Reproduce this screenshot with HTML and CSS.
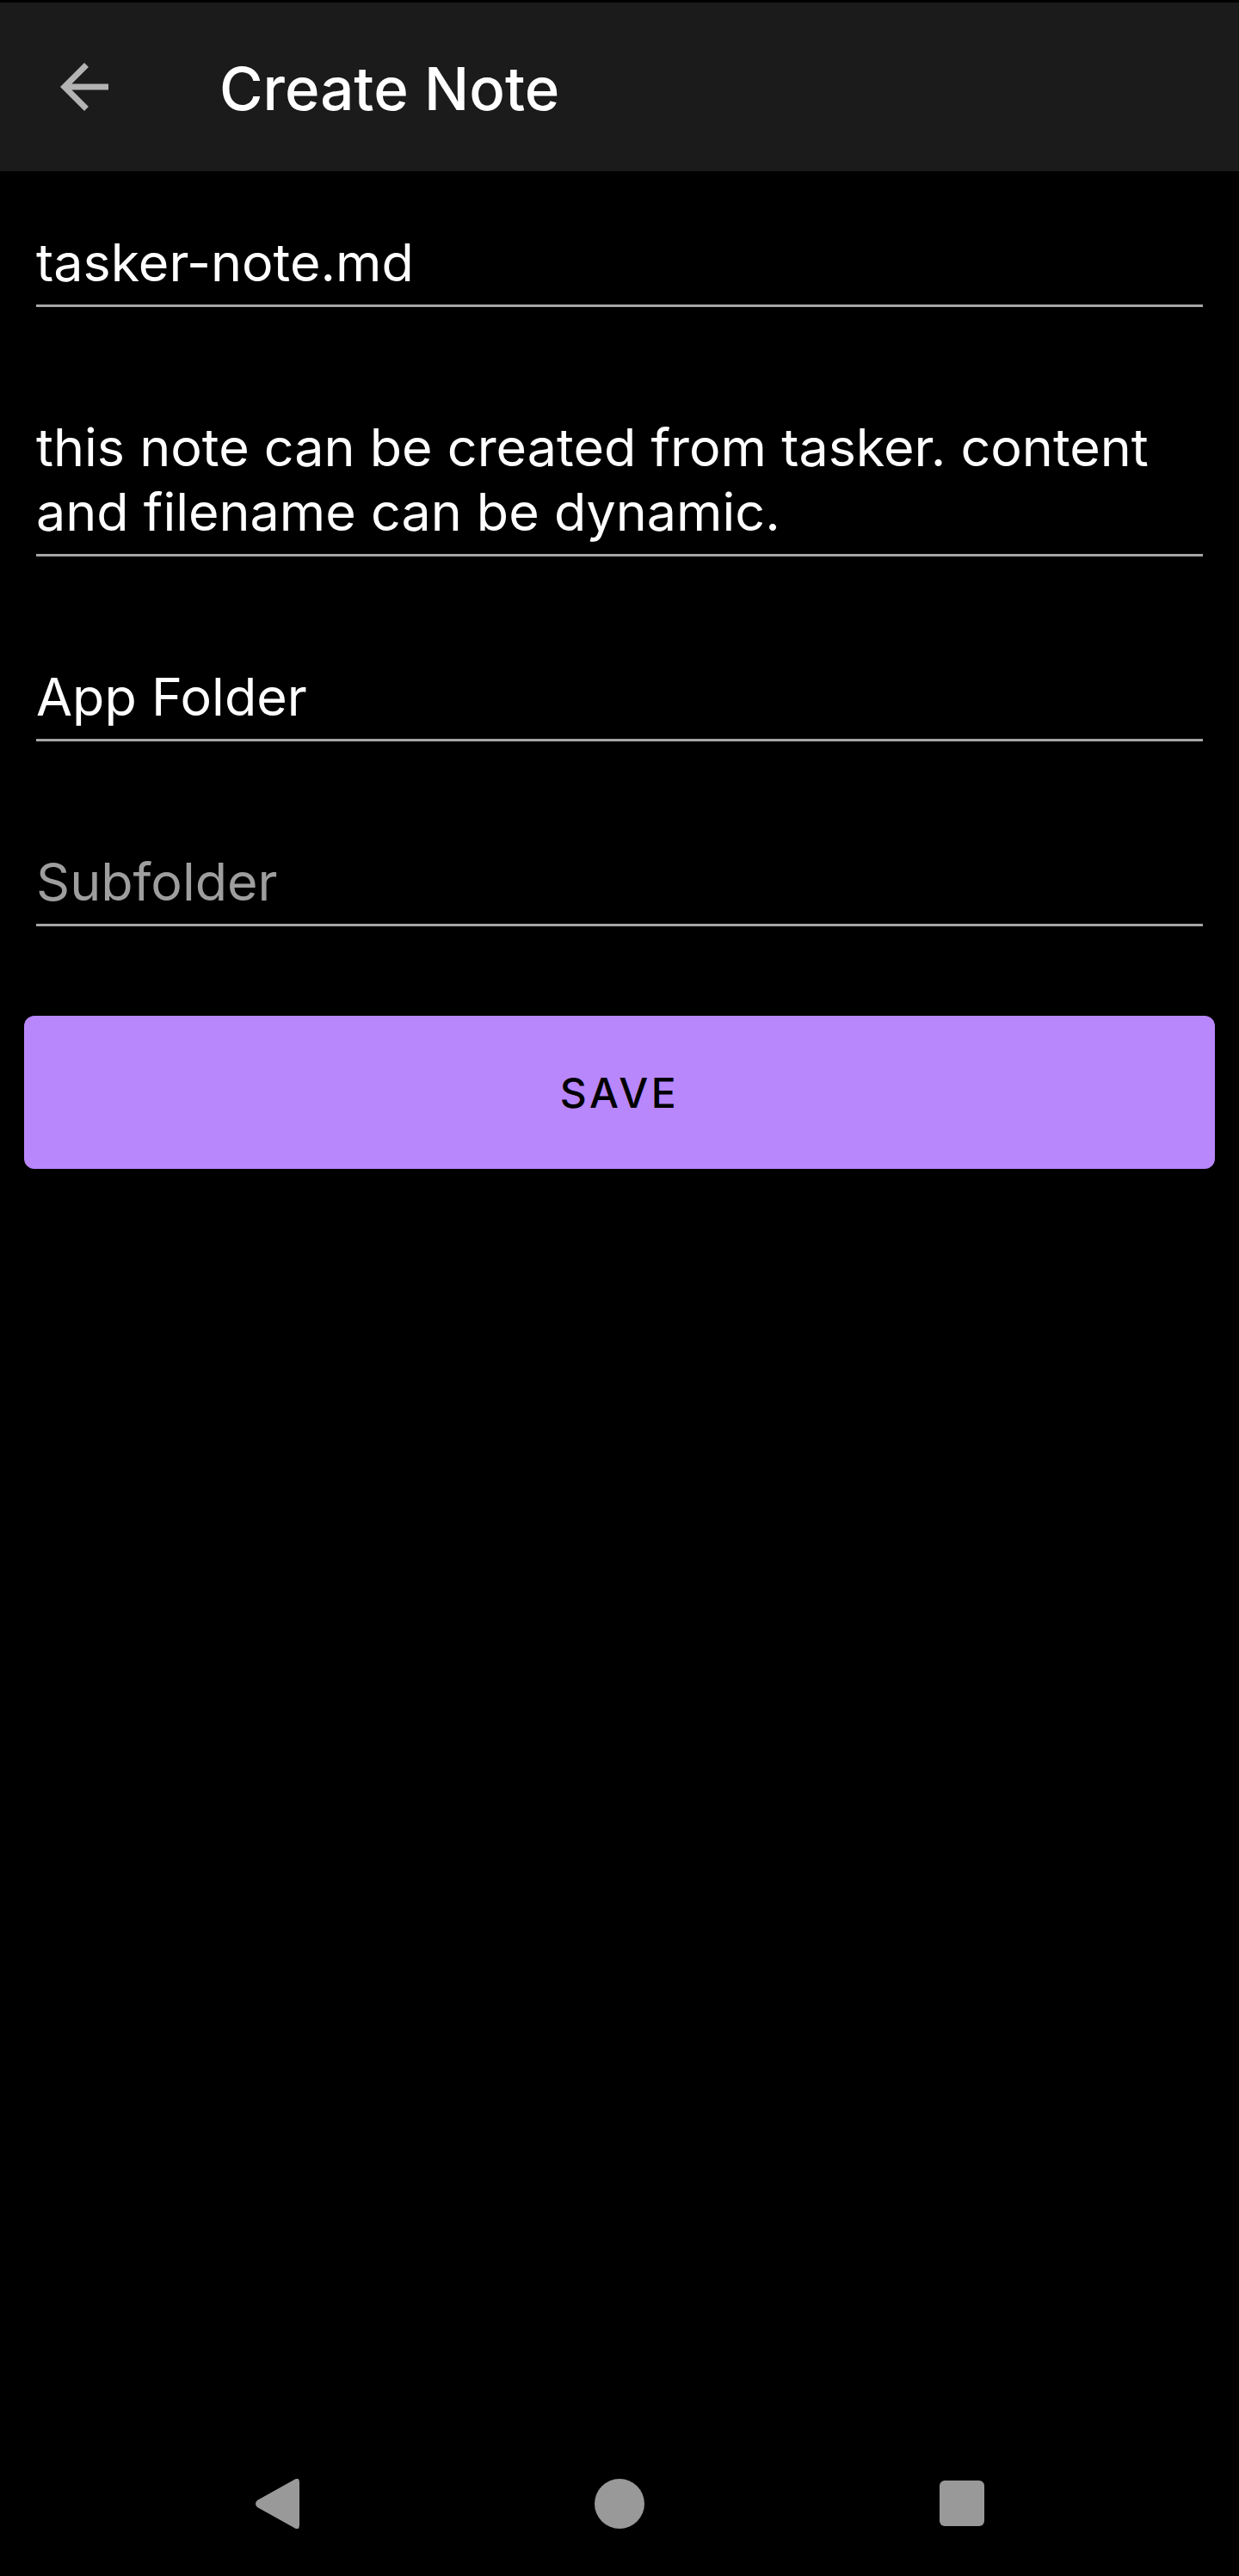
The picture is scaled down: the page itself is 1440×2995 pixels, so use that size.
FILE: index.html
```html
<!DOCTYPE html>
<html lang="en">
<head>
<meta charset="utf-8">
<title>Create Note</title>
<link rel="stylesheet" href="styles.css">
</head>
<body>
<div class="screen">
  <header class="appbar">
    <button class="nav-btn" aria-label="Back">
      <svg class="back-icon" viewBox="0 0 24 24" width="84" height="84"><path d="M20 11H7.83l5.59-5.59L12 4l-8 8 8 8 1.41-1.41L7.83 13H20v-2z"/></svg>
    </button>
    <h1 class="title">Create Note</h1>
  </header>

  <main class="form">
    <div class="field first">tasker-note.md</div>
    <div class="field">this note can be created from tasker. content and filename can be dynamic.</div>
    <div class="field">App Folder</div>
    <div class="field hint">Subfolder</div>
    <button class="save-btn">SAVE</button>
  </main>

  <nav class="sysnav">
    <div class="slot">
      <svg width="52" height="58" viewBox="0 0 52 58"><path d="M46 1 Q52 -3 52 5 L52 53 Q52 61 46 57 L3 33 Q-1 29 3 25 Z" fill="#999"/></svg>
    </div>
    <div class="slot"><span class="home"></span></div>
    <div class="slot"><span class="recents"></span></div>
  </nav>
</div>
</body>
</html>
```

FILE: styles.css
```css
* { box-sizing: border-box; }
html, body { margin: 0; padding: 0; background: #000; }
body { font-family: Inter, Roboto, "Noto Sans", Arial, sans-serif; color: #fff; }

.screen {
  min-height: 2995px;
  display: flex;
  flex-direction: column;
  padding-top: 3px;
}

.appbar {
  height: 196px;
  background: #1b1b1b;
  display: flex;
  align-items: center;
}
.nav-btn {
  background: none;
  border: 0;
  padding: 0;
  margin: 0 0 0 56px;
  width: 84px;
  height: 84px;
  display: flex;
  align-items: center;
  justify-content: center;
}
.back-icon { fill: #b3b3b3; display: block; }
.title {
  margin: 0 0 0 115px;
  padding-top: 4px;
  font-size: 69px;
  font-weight: 500;
  line-height: 1;
  color: #fff;
}

.form {
  padding: 0 42px;
  display: flex;
  flex-direction: column;
}
.field {
  margin-top: 126px;
  font-size: 61px;
  line-height: 75px;
  padding-bottom: 11px;
  border-bottom: 3px solid #a6a6a6;
  color: #fff;
}
.field.first { margin-top: 69px; }
.field.hint { color: #9e9e9e; }

.save-btn {
  margin: 104px -14px 0 -14px;
  height: 178px;
  border: 0;
  border-radius: 12px;
  background: #b987fc;
  color: #000;
  font-family: Inter, Roboto, "Noto Sans", Arial, sans-serif;
  font-size: 48px;
  font-weight: 500;
  letter-spacing: 3.6px;
}

.sysnav {
  margin-top: auto;
  height: 168px;
  display: flex;
  justify-content: center;
  align-items: center;
  padding-bottom: 1px;
}
.slot {
  width: 398px;
  display: flex;
  justify-content: center;
  align-items: center;
}
.home {
  width: 58px;
  height: 58px;
  border-radius: 50%;
  background: #999;
}
.recents {
  width: 52px;
  height: 53px;
  border-radius: 6px;
  background: #999;
}
```
